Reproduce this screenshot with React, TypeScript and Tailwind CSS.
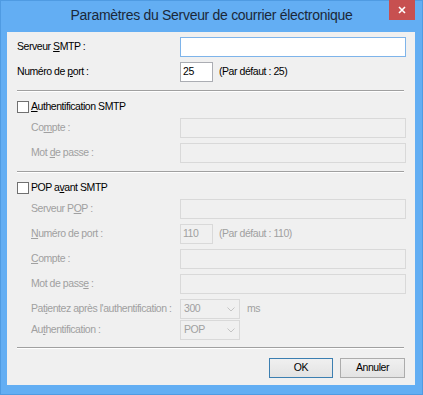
import React from "react";

const font = { fontFamily: '"Liberation Sans", Arial, sans-serif' };

type FieldProps = {
  width?: string;
  value?: string;
  disabled?: boolean;
  focused?: boolean;
};

// simple edit box, Windows 8 look
const Field: React.FC<FieldProps> = ({ width = "flex-1", value = "", disabled, focused }) => {
  const border = focused
    ? "border-[#7eb4ea]"
    : disabled
    ? "border-[#d9d9d9] bg-[#f0f0f0] text-[#a0a0a0]"
    : "border-[#abadb3] bg-white text-black";
  return (
    <div className={`${width} h-[20px] border ${border} ${focused ? "bg-white" : ""} flex items-center pl-[2px]`}>
      {value}
    </div>
  );
};

const Combo: React.FC<{ value: string }> = ({ value }) => (
  <div className="w-[60px] h-[20px] border border-[#d9d9d9] bg-[#f0f0f0] text-[#a0a0a0] flex items-center justify-between pl-[3px] pr-[4px]">
    <span>{value}</span>
    <svg width="8" height="5" viewBox="0 0 8 5">
      <path d="M0.5 0.5 L4 4 L7.5 0.5" fill="none" stroke="#c4c4c4" strokeWidth="1" />
    </svg>
  </div>
);

const Separator = () => (
  <div className="mr-[2px] h-[2px] border-t border-[#a0a0a0] border-b border-b-white" />
);

const Label: React.FC<{ children: React.ReactNode; disabled?: boolean }> = ({ children, disabled }) => (
  <div className={`w-[163px] shrink-0 ${disabled ? "pl-[14px] text-[#a0a0a0]" : "text-black"}`}>
    {children}
  </div>
);

const U: React.FC<{ children: React.ReactNode }> = ({ children }) => (
  <span className="underline underline-offset-[1px]">{children}</span>
);

const Check: React.FC<{ children: React.ReactNode }> = ({ children }) => (
  <div className="flex items-center h-[14px] gap-[2px]">
    <div className="w-[12px] h-[12px] border border-[#707070] bg-white" />
    <span className="text-black">{children}</span>
  </div>
);

export default function App() {
  return (
    <div
      className="w-[423px] h-[395px] bg-[#63aef3] border border-[#4f9be2] flex flex-col text-[10.5px] tracking-[-0.45px]"
      style={font}
    >
      {/* Title bar */}
      <div className="relative h-[31px] flex items-center justify-center pb-[2px]">
        <span className="text-[14px] tracking-[-0.3px] text-[#1b2839]">
          Paramètres du Serveur de courrier électronique
        </span>
        <div className="absolute top-[-1px] right-[7px] w-[26px] h-[20px] bg-[#c75050] flex items-center justify-center">
          <svg width="8" height="8" viewBox="0 0 8 8">
            <path d="M1 1 L7 7 M7 1 L1 7" stroke="white" strokeWidth="1.6" />
          </svg>
        </div>
      </div>

      {/* Client area */}
      <div className="flex-1 ml-[6px] mr-[7px] mb-[9px] bg-[#f0f0f0] pt-[5px] pl-[10px] pr-[9px] flex flex-col">
        <div className="flex items-center h-[20px]">
          <Label>
            Serveur <U>S</U>MTP :
          </Label>
          <Field focused />
        </div>
        <div className="flex items-center h-[20px] mt-[5px]">
          <Label>
            Numéro de <U>p</U>ort :
          </Label>
          <Field width="w-[33px]" value="25" />
          <span className="ml-[6px] text-black">(Par défaut : 25)</span>
        </div>

        <div className="mt-[8px]">
          <Separator />
        </div>

        <div className="mt-[8px]">
          <Check>
            <U>A</U>uthentification SMTP
          </Check>
        </div>
        <div className="flex items-center h-[20px] mt-[4px]">
          <Label disabled>
            Co<U>m</U>pte :
          </Label>
          <Field disabled />
        </div>
        <div className="flex items-center h-[20px] mt-[5px]">
          <Label disabled>
            Mot <U>d</U>e passe :
          </Label>
          <Field disabled />
        </div>

        <div className="mt-[8px]">
          <Separator />
        </div>

        <div className="mt-[8px]">
          <Check>
            POP a<U>v</U>ant SMTP
          </Check>
        </div>
        <div className="flex items-center h-[20px] mt-[4px]">
          <Label disabled>
            Serveur P<U>O</U>P :
          </Label>
          <Field disabled />
        </div>
        <div className="flex items-center h-[20px] mt-[5px]">
          <Label disabled>
            <U>N</U>uméro de port :
          </Label>
          <Field disabled width="w-[33px]" value="110" />
          <span className="ml-[6px] text-[#a0a0a0]">(Par défaut : 110)</span>
        </div>
        <div className="flex items-center h-[20px] mt-[5px]">
          <Label disabled>
            <U>C</U>ompte :
          </Label>
          <Field disabled />
        </div>
        <div className="flex items-center h-[20px] mt-[5px]">
          <Label disabled>
            Mot de pass<U>e</U> :
          </Label>
          <Field disabled />
        </div>
        <div className="flex items-center h-[20px] mt-[5px]">
          <Label disabled>
            Pat<U>i</U>entez après l'authentification :
          </Label>
          <Combo value="300" />
          <span className="ml-[7px] text-[#a0a0a0]">ms</span>
        </div>
        <div className="flex items-center h-[20px] mt-[1px]">
          <Label disabled>
            Au<U>t</U>hentification :
          </Label>
          <Combo value="POP" />
        </div>

        <div className="mt-[7px]">
          <Separator />
        </div>

        <div className="mt-[9px] flex justify-end gap-[7px] mr-[1px]">
          <button className="w-[64px] h-[20px] border border-[#3c7fb1] bg-gradient-to-b from-[#f0f0f0] to-[#e3e3e3] text-black">
            OK
          </button>
          <button className="w-[65px] h-[20px] border border-[#acacac] bg-gradient-to-b from-[#f0f0f0] to-[#e3e3e3] text-black">
            Annuler
          </button>
        </div>
      </div>
    </div>
  );
}
